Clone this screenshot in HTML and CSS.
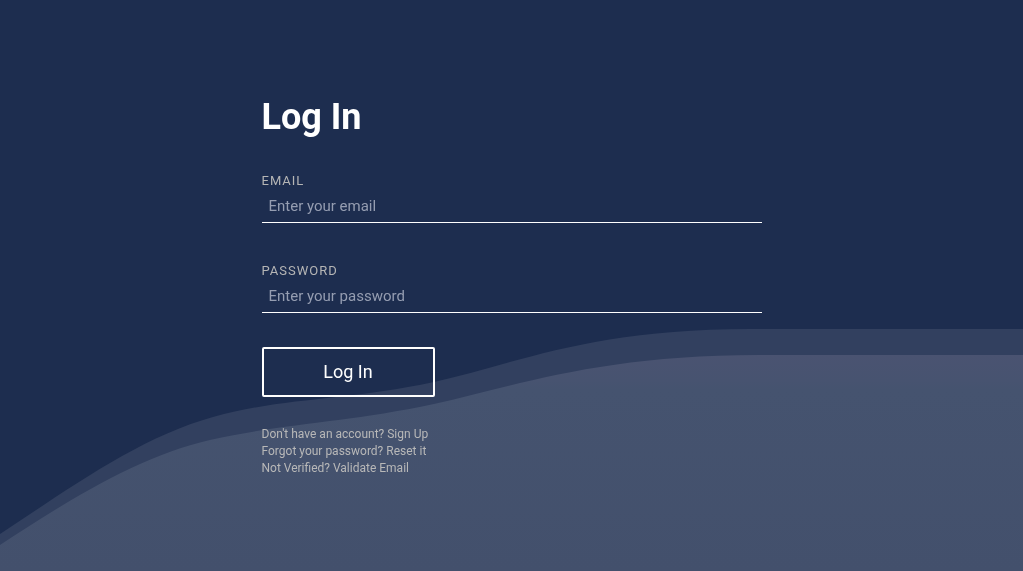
FILE: index.html
```html
<!DOCTYPE html>
<html lang="en">
<head>
<meta charset="utf-8">
<meta name="viewport" content="width=device-width, initial-scale=1">
<title>Log In</title>
<link rel="stylesheet" href="styles.css">
</head>
<body>
<svg class="waves" viewBox="0 0 1023 571" preserveAspectRatio="none" aria-hidden="true">
  <defs>
    <linearGradient id="front" x1="0" y1="355" x2="0" y2="571" gradientUnits="userSpaceOnUse">
      <stop offset="0" stop-color="#4a5371"/>
      <stop offset="0.12" stop-color="#475370"/>
      <stop offset="0.16" stop-color="#45536f"/>
      <stop offset="1" stop-color="#43506c"/>
    </linearGradient>
  </defs>
  <path class="wave-back" d="M0 534C70 488 140 437 213 417C285 397 345 401 434 382C515 364 590 329 750 329H1023V571H0Z"/>
  <path fill="url(#front)" d="M0 545C70 499 140 456 210 440C285 423 345 423 434 404C520 385 600 355 760 355H1023V571H0Z"/>
</svg>
<main class="page">
  <form class="login">
    <h1 class="title">Log In</h1>
    <div class="field">
      <label class="label" for="email">EMAIL</label>
      <input class="input" id="email" type="email" placeholder="Enter your email">
    </div>
    <div class="field">
      <label class="label" for="password">PASSWORD</label>
      <input class="input" id="password" type="password" placeholder="Enter your password">
    </div>
    <button class="submit" type="submit">Log In</button>
    <nav class="links">
      <a href="#signup">Don't have an account? Sign Up</a>
      <a href="#reset">Forgot your password? Reset it</a>
      <a href="#validate">Not Verified? Validate Email</a>
    </nav>
  </form>
</main>
</body>
</html>
```
FILE: styles.css
```css
* {
  box-sizing: border-box;
}

body {
  margin: 0;
  background: #1d2d4f;
  color: #fff;
  font-family: Roboto, sans-serif;
}

.waves {
  position: fixed;
  inset: 0;
  z-index: -1;
  width: 100%;
  height: 100%;
}

.wave-back {
  fill: #32405f;
}

.page {
  display: flex;
  justify-content: center;
  align-items: center;
  min-height: 100vh;
  padding: 24px;
}

.login {
  display: flex;
  flex-direction: column;
  width: 100%;
  max-width: 500px;
}

.title {
  margin: 0 0 34px;
  font-size: 36px;
  font-weight: 700;
  line-height: 44px;
}

.field {
  display: flex;
  flex-direction: column;
  margin-bottom: 34px;
}

.label {
  color: #b5b5b5;
  font-size: 13px;
  line-height: 16px;
  letter-spacing: 1px;
}

.input {
  height: 34px;
  padding: 2px 7px 0;
  border: 0;
  border-bottom: 1px solid #fff;
  border-radius: 0;
  outline: 0;
  background: transparent;
  color: #fff;
  font: 15px Roboto, sans-serif;
}

.field + .field {
  margin-top: 6px;
}

.input::placeholder {
  color: #959db1;
  opacity: 1;
}

.submit {
  align-self: flex-start;
  width: 173px;
  height: 50px;
  border: 2px solid #fff;
  border-radius: 2px;
  background: transparent;
  color: #fff;
  font: 18px Roboto, sans-serif;
}

.links {
  display: flex;
  flex-direction: column;
  align-items: flex-start;
  margin-top: 29px;
  font-size: 12px;
  line-height: 17px;
}

.links a {
  color: #b8b8b8;
  text-decoration: none;
}
```
